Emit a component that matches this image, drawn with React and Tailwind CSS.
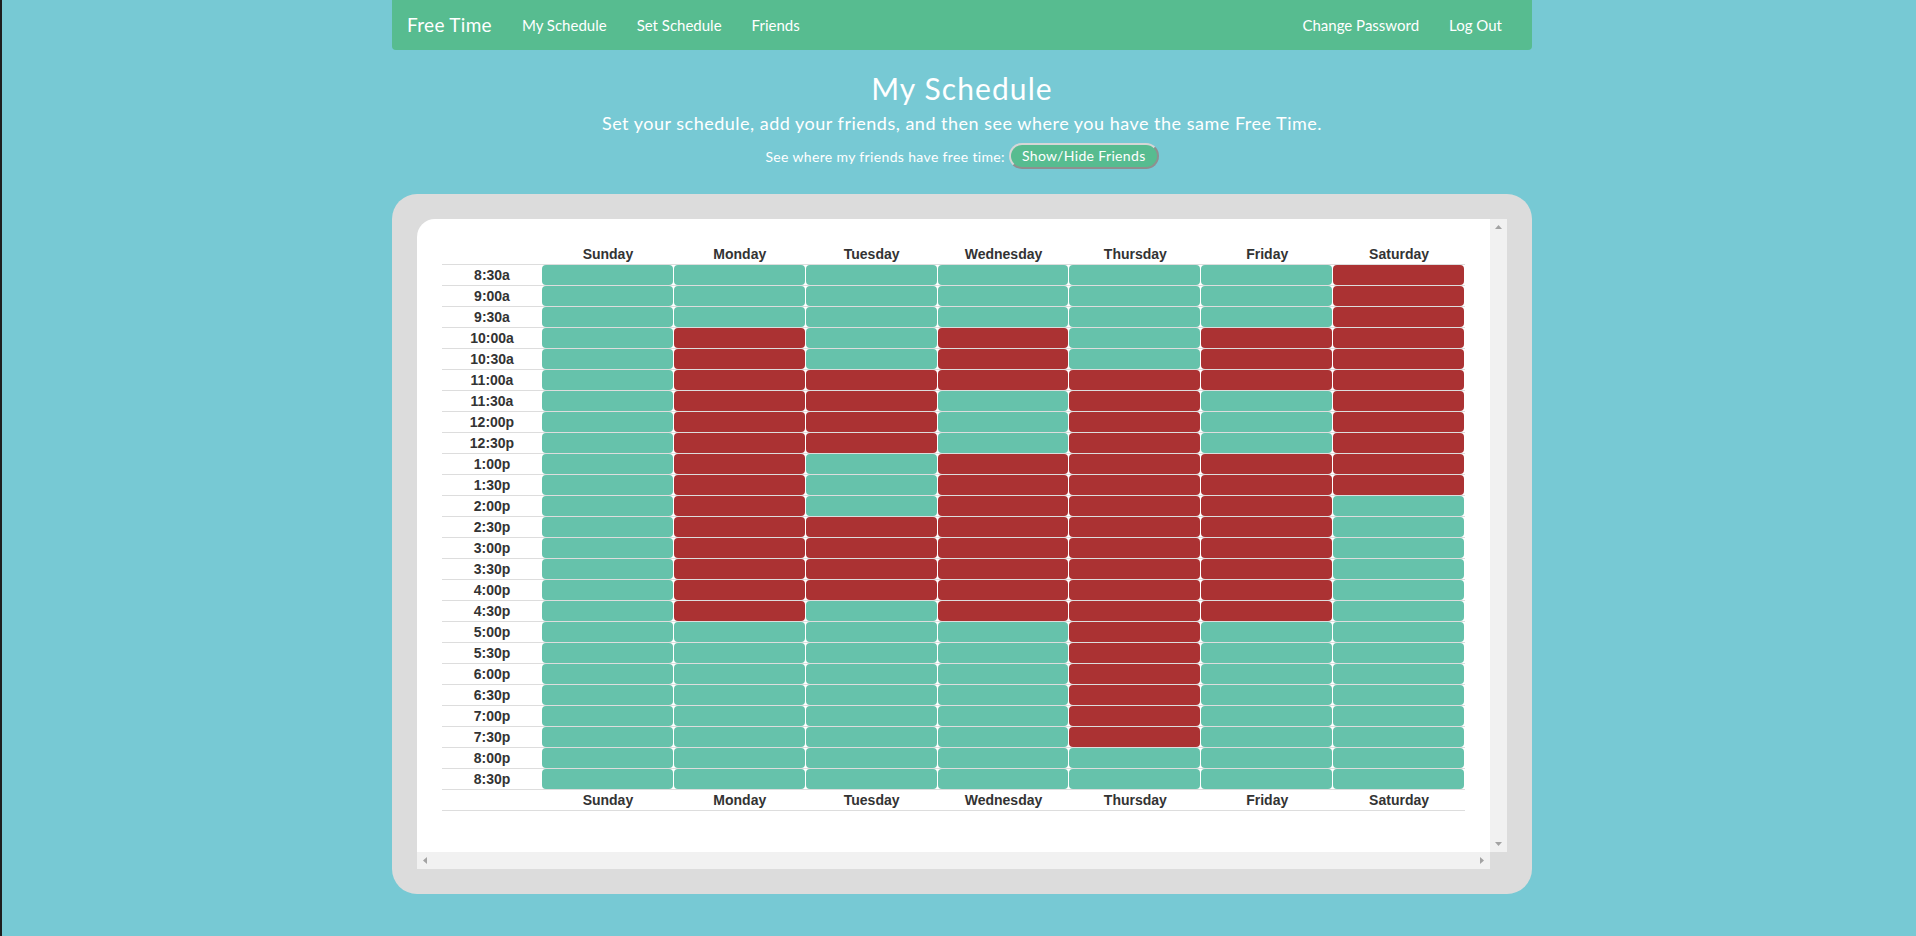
import React from 'react';

const DAYS = ['Sunday', 'Monday', 'Tuesday', 'Wednesday', 'Thursday', 'Friday', 'Saturday'];

const TIMES = [
  '8:30a', '9:00a', '9:30a', '10:00a', '10:30a', '11:00a', '11:30a',
  '12:00p', '12:30p', '1:00p', '1:30p', '2:00p', '2:30p', '3:00p', '3:30p',
  '4:00p', '4:30p', '5:00p', '5:30p', '6:00p', '6:30p', '7:00p', '7:30p',
  '8:00p', '8:30p',
];

// busy ranges as [firstRow, lastRow] (inclusive)
const BUSY = {
  Sunday: [],
  Monday: [[3, 16]],
  Tuesday: [[5, 8], [12, 15]],
  Wednesday: [[3, 5], [9, 16]],
  Thursday: [[5, 22]],
  Friday: [[3, 5], [9, 16]],
  Saturday: [[0, 10]],
};

const isBusy = (day, row) => BUSY[day].some(([a, b]) => row >= a && row <= b);

const sans = { fontFamily: 'Lato, "Open Sans", sans-serif' };

function Navbar() {
  return (
    <nav className="flex h-[50px] items-center justify-between rounded-b-[4px] bg-[#57bc90] px-[15px] text-white">
      <div className="flex items-center">
        <a className="text-[19px] tracking-[0.3px]">Free Time</a>
        <div className="ml-[15px] flex items-center text-[15px]">
          <a className="px-[15px]">My Schedule</a>
          <a className="px-[15px]">Set Schedule</a>
          <a className="px-[15px]">Friends</a>
        </div>
      </div>
      <div className="flex items-center text-[15px]">
        <a className="px-[15px]">Change Password</a>
        <a className="px-[15px]">Log Out</a>
      </div>
    </nav>
  );
}

function DayHeader() {
  return (
    <div className="grid h-5 grid-cols-[100px_repeat(7,1fr)] items-center text-center text-[14px] leading-5 font-bold text-[#333]">
      <div />
      {DAYS.map((d) => (
        <div key={d}>{d}</div>
      ))}
    </div>
  );
}

function ScheduleTable() {
  return (
    <div className="w-[1023px]" style={{ fontFamily: '"Liberation Sans", Arial, sans-serif' }}>
      <DayHeader />
      {TIMES.map((t, i) => (
        <div key={t} className="grid h-[21px] grid-cols-[100px_repeat(7,1fr)] border-t border-[#dddddd]">
          <div className="text-center text-[14px] leading-5 font-bold text-[#333]">{t}</div>
          {DAYS.map((d) => (
            <div key={d} className="h-5 pr-px">
              <div className={`h-5 rounded-[4px] ${isBusy(d, i) ? 'bg-[#ab3233]' : 'bg-[#66c2ab]'}`} />
            </div>
          ))}
        </div>
      ))}
      <div className="border-y border-[#dddddd]">
        <DayHeader />
      </div>
    </div>
  );
}

function Arrow({ dir }) {
  const pts = {
    up: '0,4 7,4 3.5,0',
    down: '0,0 7,0 3.5,4',
    left: '4,0 4,7 0,3.5',
    right: '0,0 0,7 4,3.5',
  }[dir];
  const w = dir === 'up' || dir === 'down' ? 7 : 4;
  const h = dir === 'up' || dir === 'down' ? 4 : 7;
  return (
    <svg width={w} height={h} viewBox={`0 0 ${w} ${h}`}>
      <polygon points={pts} fill="#a3a3a3" />
    </svg>
  );
}

export default function App() {
  return (
    <div className="min-h-screen border-l-2 border-[#1e1e1e] bg-[#77c9d4] pb-10" style={sans}>
      <div className="mx-auto w-[1140px] translate-x-[3px]">
        <Navbar />

        <div className="flex flex-col items-center text-white">
          <h1 className="mt-[20px] h-9 text-[30px] leading-9 font-normal tracking-[1.1px]">My Schedule</h1>
          <p className="mt-[5px] text-[18px] leading-6 tracking-[0.5px]">
            Set your schedule, add your friends, and then see where you have the same Free Time.
          </p>
          <div className="mt-[8px] flex h-[26px] items-center gap-[4px] text-[14px] tracking-[0.35px]">
            <span>See where my friends have free time:</span>
            <button className="h-[26px] rounded-[13px] border-2 border-t-[#d6d6d6] border-l-[#d6d6d6] border-r-[#8f8f8f] border-b-[#8f8f8f] bg-[#57bc90] px-[11px] text-[14px] leading-[22px] text-white">
              Show/Hide Friends
            </button>
          </div>
        </div>

        <div className="mt-[25px] rounded-[25px] bg-[#dcdcdc] p-[25px]">
          <div className="flex flex-col overflow-hidden rounded-tl-[18px]">
            <div className="flex h-[633px]">
              <div className="flex-1 bg-white p-[25px]">
                <ScheduleTable />
              </div>
              <div className="flex w-[17px] flex-col items-center justify-between bg-[#f1f1f1] py-[6px]">
                <Arrow dir="up" />
                <Arrow dir="down" />
              </div>
            </div>
            <div className="flex h-[17px]">
              <div className="flex flex-1 items-center justify-between bg-[#f1f1f1] px-[6px]">
                <Arrow dir="left" />
                <Arrow dir="right" />
              </div>
              <div className="w-[17px]" />
            </div>
          </div>
        </div>
      </div>
    </div>
  );
}
